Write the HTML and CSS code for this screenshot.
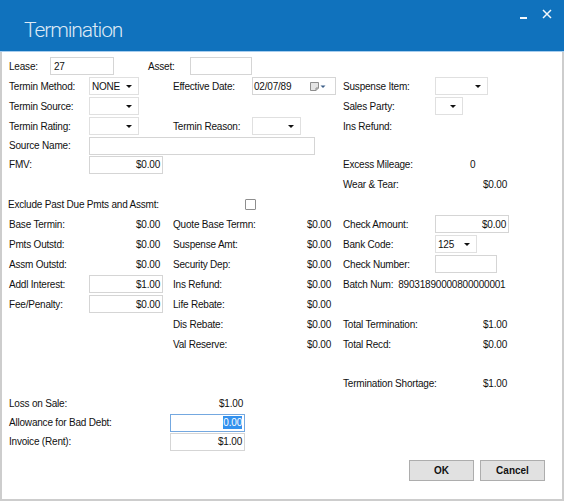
FILE: index.html
```html
<!DOCTYPE html>
<html lang="en">
<head>
    <meta charset="UTF-8">
    <meta name="viewport" content="width=device-width, initial-scale=1.0">
    <title>Termination</title>
    <link rel="stylesheet" href="styles.css">
</head>
<body>
    <div class="window">
        <div class="titlebar">
            <span class="title">Termination</span>
            <span class="winbtn min"><svg width="7" height="2"><rect width="7" height="2" fill="#f4f8fc"/></svg></span>
            <span class="winbtn close"><svg width="10" height="10" viewBox="0 0 10 10"><path d="M1 1L9 9M9 1L1 9" stroke="#f4f8fc" stroke-width="1.5"/></svg></span>
        </div>
        <div class="content">
            <div class="row">
                <span class="lbl lease">Lease:</span>
                <div class="box w64">27</div>
                <span class="lbl asset">Asset:</span>
                <div class="box w62"></div>
            </div>
            <div class="row">
                <div class="cell left"><span class="lbl">Termin Method:</span><div class="box combo w50"><span>NONE</span><i class="arrow"></i></div></div>
                <div class="cell mid"><span class="lbl">Effective Date:</span>
                    <div class="box date w85"><span>02/07/89</span>
                        <svg class="cal" width="16" height="9" viewBox="0 0 16 9">
                            <path d="M0.5 0.5H8.5V6L6 8.5H0.5Z" fill="#e4e4e4" stroke="#8d8d8d"/>
                            <path d="M6 8.5V6H8.5" fill="none" stroke="#8d8d8d"/>
                            <path d="M10.5 3.5H15.5L13 6Z" fill="#3d5f88"/>
                        </svg>
                    </div>
                </div>
                <div class="cell right"><span class="lbl">Suspense Item:</span><div class="box combo w53"><i class="arrow"></i></div></div>
            </div>
            <div class="row">
                <div class="cell left"><span class="lbl">Termin Source:</span><div class="box combo w50"><i class="arrow"></i></div></div>
                <div class="cell mid"></div>
                <div class="cell right"><span class="lbl">Sales Party:</span><div class="box combo w28"><i class="arrow"></i></div></div>
            </div>
            <div class="row">
                <div class="cell left"><span class="lbl">Termin Rating:</span><div class="box combo w50"><i class="arrow"></i></div></div>
                <div class="cell mid"><span class="lbl">Termin Reason:</span><div class="box combo w49"><i class="arrow"></i></div></div>
                <div class="cell right"><span class="lbl">Ins Refund:</span></div>
            </div>
            <div class="row short">
                <div class="cell left wide"><span class="lbl">Source Name:</span><div class="box w226"></div></div>
            </div>
            <div class="row short">
                <div class="cell left"><span class="lbl">FMV:</span><div class="box num w74">$0.00</div></div>
                <div class="cell mid"></div>
                <div class="cell right"><span class="lbl">Excess Mileage:</span><span class="plain">0</span></div>
            </div>
            <div class="row">
                <div class="cell left"></div>
                <div class="cell mid"></div>
                <div class="cell right"><span class="lbl">Wear &amp; Tear:</span><span class="val">$0.00</span></div>
            </div>
            <div class="row">
                <span class="lbl exclude">Exclude Past Due Pmts and Assmt:</span>
                <span class="check"></span>
            </div>
            <div class="row">
                <div class="cell left"><span class="lbl">Base Termin:</span><span class="val">$0.00</span></div>
                <div class="cell mid"><span class="lbl">Quote Base Termn:</span><span class="val">$0.00</span></div>
                <div class="cell right"><span class="lbl">Check Amount:</span><div class="box num w74">$0.00</div></div>
            </div>
            <div class="row">
                <div class="cell left"><span class="lbl">Pmts Outstd:</span><span class="val">$0.00</span></div>
                <div class="cell mid"><span class="lbl">Suspense Amt:</span><span class="val">$0.00</span></div>
                <div class="cell right"><span class="lbl">Bank Code:</span><div class="box combo w42"><span>125</span><i class="arrow"></i></div></div>
            </div>
            <div class="row">
                <div class="cell left"><span class="lbl">Assm Outstd:</span><span class="val">$0.00</span></div>
                <div class="cell mid"><span class="lbl">Security Dep:</span><span class="val">$0.00</span></div>
                <div class="cell right"><span class="lbl">Check Number:</span><div class="box w62"></div></div>
            </div>
            <div class="row">
                <div class="cell left"><span class="lbl">Addl Interest:</span><div class="box num w74">$1.00</div></div>
                <div class="cell mid"><span class="lbl">Ins Refund:</span><span class="val">$0.00</span></div>
                <div class="cell right"><span class="lbl batch">Batch Num:</span><span>89031890000800000001</span></div>
            </div>
            <div class="row">
                <div class="cell left"><span class="lbl">Fee/Penalty:</span><div class="box num w74">$0.00</div></div>
                <div class="cell mid"><span class="lbl">Life Rebate:</span><span class="val">$0.00</span></div>
                <div class="cell right"></div>
            </div>
            <div class="row">
                <div class="cell left"></div>
                <div class="cell mid"><span class="lbl">Dis Rebate:</span><span class="val">$0.00</span></div>
                <div class="cell right"><span class="lbl">Total Termination:</span><span class="val">$1.00</span></div>
            </div>
            <div class="row">
                <div class="cell left"></div>
                <div class="cell mid"><span class="lbl">Val Reserve:</span><span class="val">$0.00</span></div>
                <div class="cell right"><span class="lbl">Total Recd:</span><span class="val">$0.00</span></div>
            </div>
            <div class="row"></div>
            <div class="row short">
                <div class="cell left"></div>
                <div class="cell mid"></div>
                <div class="cell right"><span class="lbl">Termination Shortage:</span><span class="val">$1.00</span></div>
            </div>
            <div class="row">
                <span class="lbl bottom">Loss on Sale:</span><span class="val w75">$1.00</span>
            </div>
            <div class="row short">
                <span class="lbl bottom">Allowance for Bad Debt:</span><div class="box num w75 focus"><span class="sel">0.00</span></div>
            </div>
            <div class="row short">
                <span class="lbl bottom">Invoice (Rent):</span><div class="box num w75">$1.00</div>
            </div>
            <div class="actions">
                <button class="btn">OK</button>
                <button class="btn">Cancel</button>
            </div>
        </div>
    </div>
</body>
</html>
```

FILE: styles.css
```css
body {
    margin: 0;
    background: #fff;
    font-family: "Liberation Sans", Arial, sans-serif;
    font-size: 10px;
    letter-spacing: -0.2px;
    color: #111;
}
.window {
    width: 564px;
    height: 501px;
    display: flex;
    flex-direction: column;
}
.titlebar {
    height: 51px;
    flex-shrink: 0;
    display: flex;
    align-items: flex-start;
    background: #1072bd;
    border-bottom: 1px solid #a7cdee;
}
.title {
    flex: 1;
    padding: 18px 0 0 24px;
    font-family: Roboto, "Open Sans", sans-serif;
    font-weight: 300;
    font-size: 21px;
    line-height: 25px;
    letter-spacing: -1.1px;
    color: #dde9f5;
}
.winbtn {
    display: flex;
}
.min {
    margin: 17px 15px 0 0;
}
.close {
    margin: 9px 12px 0 0;
}
.content {
    flex: 1;
    padding: 4px 0 0 7px;
    border: 2px solid #cdcdcd;
    border-top: none;
}
.row {
    display: flex;
    align-items: center;
    height: 20px;
    white-space: nowrap;
}
.row.short {
    height: 19px;
}
.cell {
    display: flex;
    align-items: center;
    height: 100%;
}
.left {
    width: 155px;
}
.left.wide {
    width: auto;
}
.mid {
    width: 163px;
    margin-left: 9px;
}
.right {
    width: 166px;
    margin-left: 7px;
}
.lbl {
    flex-shrink: 0;
}
.left .lbl {
    width: 80px;
}
.mid .lbl {
    width: 79px;
}
.right .lbl {
    width: 92px;
}
.right .lbl.batch {
    width: auto;
    margin-right: 5px;
}
.lease {
    width: 41px;
}
.asset {
    width: 42px;
    margin-left: 34px;
}
.exclude {
    width: 237px;
    margin-left: -1px;
}
.bottom {
    width: 161px;
}
.val {
    box-sizing: border-box;
    text-align: right;
    width: 75px;
    padding-right: 4px;
}
.mid .val {
    width: 84px;
    padding-right: 5px;
}
.right .val {
    width: 74px;
    padding-right: 2px;
}
.val.w75 {
    padding-right: 2px;
}
.plain {
    padding-left: 35px;
}
.box {
    box-sizing: border-box;
    height: 18px;
    display: flex;
    align-items: center;
    padding: 0 3px;
    background: #fff;
    border: 1px solid #d5d5d5;
}
.box.num {
    justify-content: flex-end;
    padding-right: 2px;
}
.combo {
    border-color: #e0e0e0;
    padding-left: 2px;
}
.arrow {
    margin-left: auto;
    margin-right: 3px;
    width: 0;
    height: 0;
    border-left: 3px solid transparent;
    border-right: 3px solid transparent;
    border-top: 3px solid #111;
}
.date {
    padding-left: 1px;
}
.cal {
    margin-left: auto;
    margin-right: 6px;
}
.focus {
    border-color: #74a8e0;
}
.sel {
    background: #3391ee;
    color: #fff;
    line-height: 13px;
}
.check {
    width: 11px;
    height: 11px;
    box-sizing: border-box;
    border: 1px solid #8e8e8e;
    border-radius: 1px;
    background: #fff;
}
.w28 { width: 28px; }
.w42 { width: 42px; }
.w49 { width: 49px; }
.w50 { width: 50px; }
.w53 { width: 53px; }
.w62 { width: 62px; }
.w64 { width: 64px; }
.w74 { width: 74px; }
.w75 { width: 75px; }
.w85 { width: 85px; }
.w226 { width: 226px; }
.actions {
    display: flex;
    justify-content: flex-end;
    gap: 6px;
    margin-top: 9px;
    padding-right: 17px;
}
.btn {
    width: 65px;
    height: 21px;
    padding: 0;
    background: #e1e1e1;
    border: 1px solid #adadad;
    font-family: "Liberation Sans", Arial, sans-serif;
    font-size: 10px;
    font-weight: bold;
    color: #111;
}
```
